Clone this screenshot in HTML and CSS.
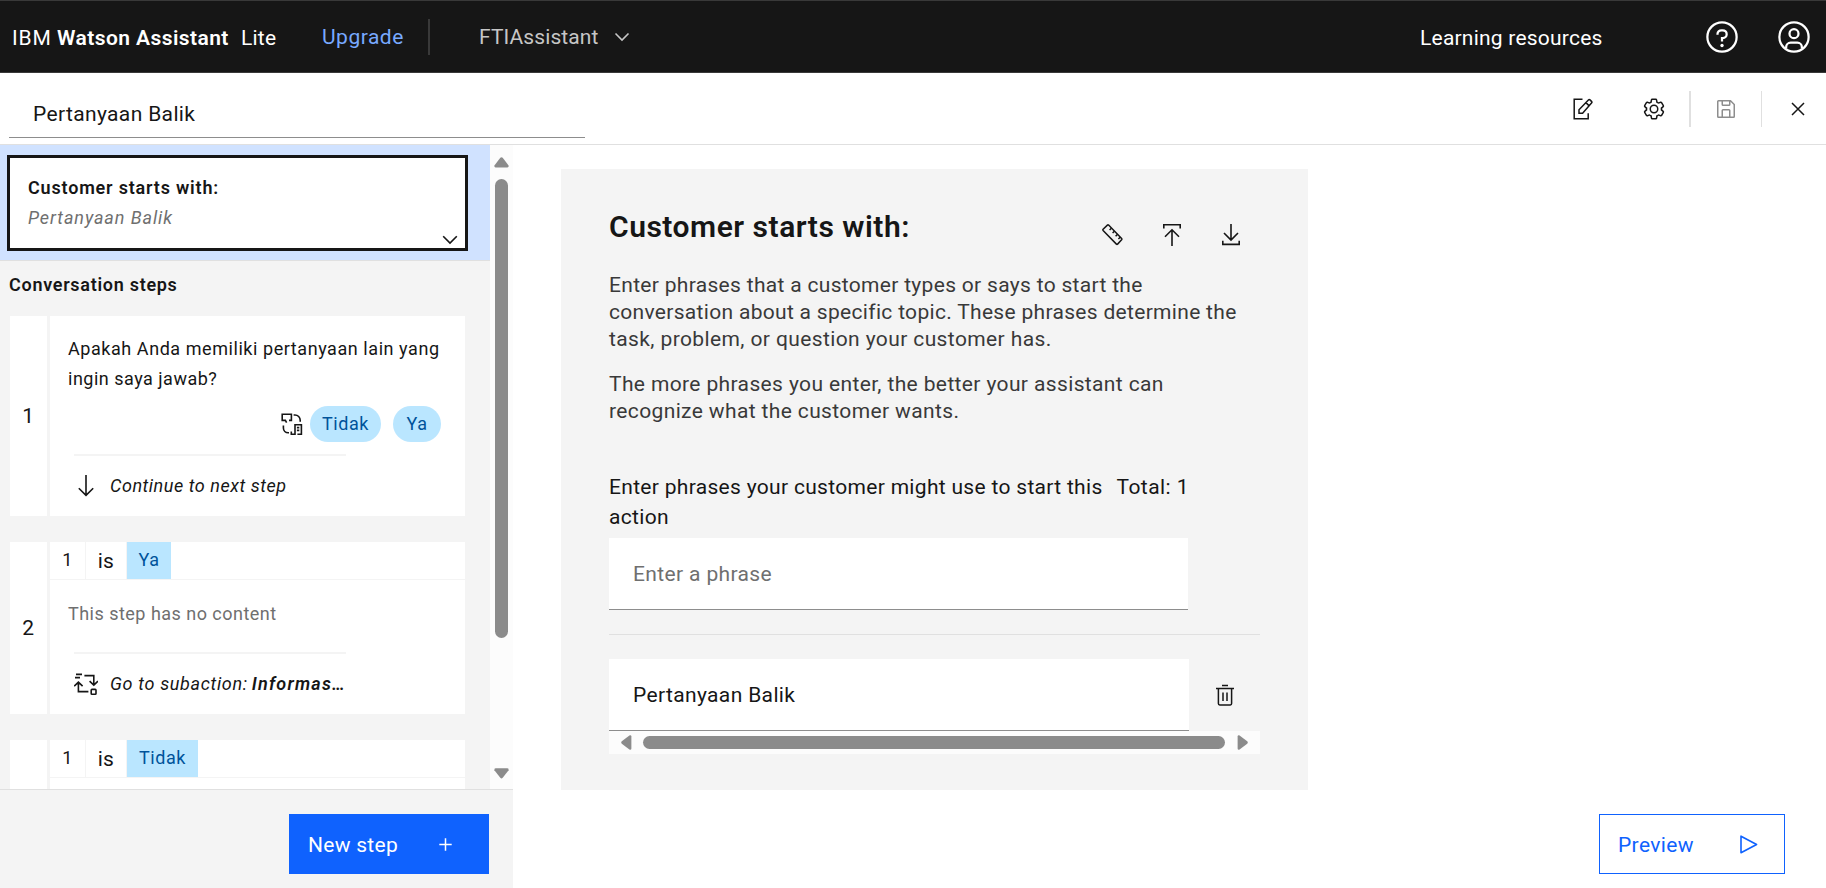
FILE: index.html
```html
<!DOCTYPE html>
<html lang="en">
<head>
<meta charset="utf-8">
<title>Watson Assistant</title>
<link rel="stylesheet" href="styles.css">
</head>
<body>
<header class="topbar">
  <div class="brand"><span class="ibm">IBM</span><b class="product">Watson Assistant</b><span class="plan">Lite</span></div>
  <a class="upgrade">Upgrade</a>
  <span class="topbar-rule"></span>
  <div class="assistant"><span>FTIAssistant</span>
    <svg width="16" height="10" viewBox="0 0 16 10"><path d="M1.5 1.5L8 8L14.5 1.5" fill="none" stroke="#c6c6c6" stroke-width="1.6"/></svg>
  </div>
  <a class="learning">Learning resources</a>
  <svg class="help" width="36" height="36" viewBox="0 0 32 32"><g fill="none" stroke="#fff" stroke-width="2"><circle cx="16" cy="16" r="13"/><path d="M12 14v-.7A3.4 3.4 0 0 1 15.4 10h1.3a3.4 3.4 0 0 1 0 6.9H16v3"/></g><circle cx="16" cy="23.5" r="1.5" fill="#fff"/></svg>
  <svg width="36" height="36" viewBox="0 0 32 32"><g fill="none" stroke="#fff" stroke-width="2"><circle cx="16" cy="16" r="13"/><circle cx="16" cy="13" r="4"/><path d="M9 26.2V25a4 4 0 0 1 4-4h6a4 4 0 0 1 4 4v1.2"/></g></svg>
</header>

<div class="titlebar">
  <div class="action-name">Pertanyaan Balik</div>
  <div class="tools">
    <svg class="edit" width="20" height="22" viewBox="0 0 20 22"><g fill="none" stroke="#161616" stroke-width="1.5"><path d="M9.5 1.2H1.2v19.6h14v-5.6"/><path d="M6 15.3v-3.6L15.4 1.9q.8-.8 1.6 0l1.5 1.5q.8.8 0 1.6L9.6 15.3zM12.9 4.6l3 3"/></g></svg>
    <svg class="gear" width="24" height="24" viewBox="0 0 32 32"><path fill="#161616" d="M27,16.76c0-.25,0-.5,0-.76s0-.51,0-.77l1.92-1.68A2,2,0,0,0,29.3,11L26.94,7a2,2,0,0,0-1.73-1,2,2,0,0,0-.64.1l-2.43.82a11.35,11.35,0,0,0-1.31-.75l-.51-2.52a2,2,0,0,0-2-1.61H13.64a2,2,0,0,0-2,1.61l-.51,2.52a11.48,11.48,0,0,0-1.32.75L7.43,6.06A2,2,0,0,0,6.79,6,2,2,0,0,0,5.06,7L2.7,11a2,2,0,0,0,.41,2.51L5,15.24c0,.25,0,.5,0,.76s0,.51,0,.77L3.11,18.45A2,2,0,0,0,2.7,21L5.06,25a2,2,0,0,0,1.73,1,2,2,0,0,0,.64-.1l2.43-.82a11.35,11.35,0,0,0,1.31.75l.51,2.52a2,2,0,0,0,2,1.61h4.72a2,2,0,0,0,2-1.61l.51-2.52a11.48,11.48,0,0,0,1.32-.75l2.42.82a2,2,0,0,0,.64.1,2,2,0,0,0,1.73-1L29.3,21a2,2,0,0,0-.41-2.51ZM25.21,24l-3.43-1.16a8.86,8.86,0,0,1-2.71,1.57L18.36,28H13.64l-.71-3.55a9.36,9.36,0,0,1-2.7-1.57L6.79,24,4.43,20l2.72-2.4a8.9,8.9,0,0,1,0-3.13L4.43,12,6.79,8l3.43,1.16a8.86,8.86,0,0,1,2.71-1.57L13.64,4h4.72l.71,3.55a9.36,9.36,0,0,1,2.7,1.57L25.21,8,27.57,12l-2.72,2.4a8.9,8.9,0,0,1,0,3.13L27.57,20Z"/><circle cx="16" cy="16" r="5" fill="none" stroke="#161616" stroke-width="2"/></svg>
    <span class="tool-rule thick"></span>
    <svg class="save" width="24" height="24" viewBox="0 0 32 32"><path fill="#8d8d8d" d="M27.71,9.29l-5-5A1,1,0,0,0,22,4H6A2,2,0,0,0,4,6V26a2,2,0,0,0,2,2H26a2,2,0,0,0,2-2V10A1,1,0,0,0,27.71,9.29ZM12,6h8v4H12Zm8,20H12V18h8Zm2,0V18a2,2,0,0,0-2-2H12a2,2,0,0,0-2,2v8H6V6h4v4a2,2,0,0,0,2,2h8a2,2,0,0,0,2-2V6.41l4,4V26Z"/></svg>
    <span class="tool-rule"></span>
    <svg class="close" width="24" height="24" viewBox="0 0 32 32"><path d="M8 8L24 24M24 8L8 24" stroke="#161616" stroke-width="2"/></svg>
  </div>
</div>

<div class="workspace">
  <aside class="sidebar">
    <div class="scroller">
      <div class="steps">
        <div class="start-wrap">
          <div class="start-card">
            <div class="start-title">Customer starts with:</div>
            <div class="start-phrase">Pertanyaan Balik</div>
            <svg class="start-chevron" width="16" height="10" viewBox="0 0 16 10"><path d="M1.2 1.2L8 8L14.8 1.2" fill="none" stroke="#161616" stroke-width="1.6"/></svg>
          </div>
        </div>
        <h2 class="steps-title">Conversation steps</h2>

        <section class="step step-1">
          <div class="step-number">1</div>
          <div class="step-main">
            <p class="step-text"><span class="line-a">Apakah Anda memiliki pertanyaan lain yang</span><br>ingin saya jawab?</p>
            <div class="options">
              <svg width="22" height="23" viewBox="0 0 22 23"><g fill="none" stroke="#161616" stroke-width="1.6"><path d="M5.6 9.6L4.4 7.4H1.2V1.2h9.2v6.2H8M12.6 2h1.4a5.2 5.2 0 0 1 5.2 5.2v1.6M2.4 12.6v2.4a4.8 4.8 0 0 0 4.8 4.8h.8M10.3 18.4v2.8h3.7V11.8h6.4v9.4h-4"/><path d="M15.9 14.6h2.4M15.9 17.4h2.4"/></g></svg>
              <span class="pill pill-tidak">Tidak</span><span class="pill pill-ya">Ya</span>
            </div>
            <div class="next"><svg class="down" width="16" height="22" viewBox="0 0 16 22"><path d="M8 0V20.5M.8 13.2L8 20.4L15.2 13.2" fill="none" stroke="#161616" stroke-width="1.6"/></svg><span class="next-text">Continue to next step</span></div>
          </div>
        </section>

        <section class="step step-2">
          <div class="step-number">2</div>
          <div class="step-main">
            <div class="condition"><span class="ref">1</span><span class="op">is</span><span class="value value-ya">Ya</span></div>
            <p class="step-text empty">This step has no content</p>
            <div class="next"><svg class="sub" width="24" height="23" viewBox="0 0 24 23"><g fill="none" stroke="#161616" stroke-width="1.6"><path d="M2 1.4h6M1 4.6h5M10.4 2.6h9.4v9M15.6 8.2l4.2 4 4.2-4M4.4 9v9.6h10M.2 13.2l4.2-4 4.2 4"/><rect x="17.2" y="16.4" width="4.8" height="4.8" rx=".8"/></g></svg><span class="next-text go">Go to subaction:</span><b class="target">Informas…</b></div>
          </div>
        </section>

        <section class="step step-3">
          <div class="step-number"></div>
          <div class="step-main">
            <div class="condition"><span class="ref">1</span><span class="op">is</span><span class="value value-tidak">Tidak</span></div>
          </div>
        </section>
      </div>
      <div class="vbar">
        <svg width="15" height="11" viewBox="0 0 15 11"><path d="M6.3 .8Q7.5-.4 8.7.8L14.6 8.4Q15 10.4 13.4 10.4H1.6Q0 10.4.4 8.4Z" fill="#8b8b8b"/></svg>
        <span class="vthumb"></span>
        <svg class="vdown" width="15" height="11" viewBox="0 0 15 11"><path d="M6.3 9.8Q7.5 11 8.7 9.8L14.6 2.2Q15 .2 13.4.2H1.6Q0 .2.4 2.2Z" fill="#8b8b8b"/></svg>
      </div>
    </div>
    <div class="sidebar-footer">
      <button class="new-step"><span>New step</span><svg width="13" height="13" viewBox="0 0 13 13"><path d="M6.5 .3V12.7M.3 6.5H12.7" stroke="#fff" stroke-width="1.5"/></svg></button>
    </div>
  </aside>

  <main class="panel">
    <div class="panel-head">
      <h1>Customer starts with:</h1>
      <div class="panel-tools">
        <svg width="21" height="22" viewBox="0 0 21 22"><g fill="none" stroke="#161616" stroke-width="1.5"><path d="M5.4 1.1Q6 .6 6.6 1.1L19.6 14.6Q20.1 15.2 19.6 15.8L15.6 20.1Q15 20.6 14.4 20.1L1.1 6.4Q.6 5.8 1.1 5.2Z"/><path d="M9.4 4.2L7.6 6.1M12.4 7.2L10.6 9.1M15.4 10.4L13.6 12.3M18.2 13.2L16.4 15.1"/></g></svg>
        <svg width="18" height="22" viewBox="0 0 18 22"><path d="M.8 4.6V.8H17.2V4.6M9 22V6M2 12.8L9 5.8L16 12.8" fill="none" stroke="#161616" stroke-width="1.6"/></svg>
        <svg width="18" height="22" viewBox="0 0 18 22"><path d="M.8 16.8V20.4H17.2V16.8M9 0V15.8M2 9L9 16L16 9" fill="none" stroke="#161616" stroke-width="1.6"/></svg>
      </div>
    </div>
    <p class="intro">Enter phrases that a customer types or says to start the<br><span class="w2">conversation about a specific topic. These phrases determine the</span><br><span class="w3">task, problem, or question your customer has.</span></p>
    <p class="intro more">The more phrases you enter, the better your assistant can<br>recognize what the customer wants.</p>
    <div class="label-row"><span>Enter phrases your customer might use to start this<br>action</span><span class="total">Total: 1</span></div>
    <div class="field placeholder">Enter a phrase</div>
    <hr>
    <div class="phrase-row">
      <div class="field">Pertanyaan Balik</div>
      <svg width="18" height="22" viewBox="0 0 18 22"><g fill="none" stroke="#161616" stroke-width="1.5"><path d="M0 4.6H18M6 1.4H12M2.4 4.6V19.6Q2.4 20.9 3.7 20.9H14.3Q15.6 20.9 15.6 19.6V4.6M7 8.4V17M11 8.4V17"/></g></svg>
    </div>
    <div class="hbar">
      <svg width="11" height="15" viewBox="0 0 11 15"><path d="M.8 6.3Q-.4 7.5.8 8.7L8.4 14.6Q10.4 15 10.4 13.4V1.6Q10.4 0 8.4.4Z" fill="#8b8b8b"/></svg>
      <span class="hthumb"></span>
      <svg width="11" height="15" viewBox="0 0 11 15"><path d="M10.2 6.3Q11.4 7.5 10.2 8.7L2.6 14.6Q.6 15 .6 13.4V1.6Q.6 0 2.6.4Z" fill="#8b8b8b"/></svg>
    </div>
  </main>

  <button class="preview"><span>Preview</span><svg width="18" height="19" viewBox="0 0 18 19"><path d="M1 1.2V17.8L16.6 9.5Z" fill="none" stroke="#0f62fe" stroke-width="1.6" stroke-linejoin="round"/></svg></button>
</div>
</body>
</html>
```
FILE: styles.css
```css
* { box-sizing: border-box; }
body {
  margin: 0;
  width: 1826px;
  height: 888px;
  overflow: hidden;
  background: #fff;
  color: #161616;
  font: 400 21px/30px Roboto, sans-serif;
  letter-spacing: .36px;
  display: flex;
  flex-direction: column;
}
p, h1, h2, hr { margin: 0; }
svg { display: block; flex: none; }
button { font: inherit; letter-spacing: inherit; border: 0; border-radius: 0; text-align: left; }
span, b { white-space: nowrap; }

/* top bar */
.topbar {
  height: 73px;
  flex: none;
  background: #161616;
  border-top: 1px solid #393939;
  border-bottom: 1px solid #393939;
  display: flex;
  align-items: center;
  padding-left: 12px;
  color: #fff;
}
.brand { display: flex; width: 310px; padding-top: 2px; }
.ibm { width: 45px; letter-spacing: .8px; }
.product { width: 184px; font-weight: 600; letter-spacing: .42px; }
.plan { letter-spacing: .2px; }
.upgrade { width: 106px; color: #78a9ff; letter-spacing: .5px; }
.topbar-rule { width: 2px; height: 36px; background: #393939; }
.assistant { display: flex; align-items: center; gap: 15px; padding-left: 49px; width: 990px; color: #c6c6c6; letter-spacing: .1px; }
.learning { width: 284px; padding-top: 2px; letter-spacing: .22px; }
.help { margin-right: 36px; }

/* action title and tools */
.titlebar {
  height: 72px;
  flex: none;
  border-bottom: 1px solid #e0e0e0;
  display: flex;
  justify-content: space-between;
  padding-left: 9px;
}
.action-name { width: 576px; height: 65px; border-bottom: 1px solid #8d8d8d; padding: 26px 0 0 24px; }
.tools { display: flex; align-items: center; height: 72px; padding-right: 16px; }
.gear { margin-left: 49px; }
.tool-rule { width: 1px; height: 36px; background: #e0e0e0; margin-left: 23px; }
.tool-rule.thick { width: 2px; }
.save { margin-left: 23px; }
.close { margin-left: 24px; }

/* workspace */
.workspace { display: flex; height: 743px; }
.sidebar { width: 513px; display: flex; flex-direction: column; font-size: 18px; letter-spacing: .55px; }
.scroller { height: 644px; display: flex; overflow: hidden; }
.steps { width: 490px; background: #f4f4f4; overflow: hidden; }
.start-wrap { height: 116px; padding: 10px 22px 9px 7px; background: #d0e2ff; border-bottom: 1px solid #e0e0e0; }
.start-card { position: relative; height: 96px; border: 3px solid #161616; background: #fff; padding: 15px 18px; }
.start-title { font-weight: 600; letter-spacing: .81px; }
.start-phrase { font-style: italic; color: #6f6f6f; letter-spacing: .92px; }
.start-chevron { position: absolute; right: 7px; bottom: 3px; }
.steps-title { font-size: 18px; font-weight: 600; letter-spacing: .71px; padding: 9px 0 0 9px; height: 55px; }

.step { display: flex; gap: 3px; margin: 0 25px 26px 10px; }
.step-number { width: 37px; background: #fff; display: flex; align-items: center; justify-content: center; font-size: 21px; }
.step-main { flex: 1; background: #fff; }
.step-1 { height: 200px; }
.step-2 { height: 172px; }
.step-3 { height: 172px; }
.step-text { padding: 18px 0 0 18px; letter-spacing: .5px; }
.line-a { letter-spacing: .56px; }
.options { display: flex; align-items: center; justify-content: flex-end; height: 36px; margin-top: 12px; padding-right: 24px; }
.pill { background: #bae6ff; color: #00539a; border-radius: 18px; height: 36px; line-height: 36px; text-align: center; }
.pill-tidak { width: 71px; margin: 0 12px 0 7px; }
.pill-ya { width: 48px; }
.next { width: 272px; margin: 12px 0 0 24px; border-top: 2px solid #f4f4f4; padding-top: 15px; display: flex; align-items: center; font-style: italic; }
.down { margin: 0 16px 0 4px; }
.next-text { letter-spacing: .54px; }
.sub { margin-right: 12px; }
.go { width: 142px; letter-spacing: .66px; }
.target { font-weight: 600; letter-spacing: 1.2px; }
.condition { display: flex; height: 38px; border-bottom: 1px solid #f4f4f4; line-height: 36px; text-align: center; }
.ref { width: 36px; border-right: 1px solid #f4f4f4; }
.op { width: 41px; font-size: 21px; line-height: 38px; border-right: 1px solid #f4f4f4; letter-spacing: .2px; }
.value { background: #bae6ff; color: #00539a; }
.value-ya { width: 44px; }
.value-tidak { width: 71px; }
.empty { padding-top: 19px; color: #6f6f6f; letter-spacing: .48px; }
.step-2 .next { margin-top: 23px; }

.vbar { width: 23px; background: #fcfcfc; padding: 12px 0 10px 4px; display: flex; flex-direction: column; }
.vthumb { width: 13px; height: 459px; margin: 11px 0 0 1px; border-radius: 7px; background: #8b8b8b; }
.vdown { margin-top: auto; }

.sidebar-footer { height: 99px; background: #f4f4f4; border-top: 1px solid #e0e0e0; padding: 24px 24px 0; display: flex; justify-content: flex-end; align-items: flex-start; font-size: 21px; letter-spacing: .28px; }
.new-step { width: 200px; height: 60px; background: #0f62fe; color: #fff; display: flex; align-items: center; justify-content: space-between; padding: 0 37px 0 19px; }
.new-step span, .preview span { padding-top: 2px; }

/* detail panel */
.panel { width: 747px; height: 621px; margin: 24px 0 0 48px; background: #f4f4f4; padding: 0 48px; }
.panel-head { display: flex; justify-content: space-between; height: 103px; }
h1 { font-size: 30px; line-height: 40px; font-weight: 600; letter-spacing: .52px; padding-top: 38px; }
.panel-tools { display: flex; gap: 40px; padding: 55px 20px 0 0; }
.panel-tools svg:nth-child(2) { margin-right: 1px; }
.intro { line-height: 27px; color: #393939; letter-spacing: .31px; }
.w2 { letter-spacing: .31px; }
.w3 { letter-spacing: .39px; }
.more { margin-top: 18px; letter-spacing: .37px; }
.label-row { display: flex; justify-content: space-between; width: 580px; margin-top: 47px; letter-spacing: .31px; }
.total { letter-spacing: .44px; }
.field { width: 580px; height: 72px; background: #fff; border-bottom: 1px solid #8d8d8d; padding: 21px 24px; }
.label-row + .field { margin-top: 6px; width: 579px; }
.placeholder { color: #6f6f6f; }
hr { border: 0; height: 1px; background: #e0e0e0; margin: 24px 0; }
.phrase-row { display: flex; align-items: center; gap: 27px; }
.hbar { height: 23px; background: #fcfcfc; display: flex; align-items: center; padding: 0 12px; }
.hthumb { width: 582px; height: 13px; border-radius: 7px; background: #8b8b8b; margin: 0 auto 0 11px; }

.preview { width: 186px; height: 60px; margin: auto 41px 14px auto; background: #fff; border: 1px solid #0f62fe; color: #0f62fe; display: flex; align-items: center; justify-content: space-between; padding: 0 26px 0 18px; }
```
